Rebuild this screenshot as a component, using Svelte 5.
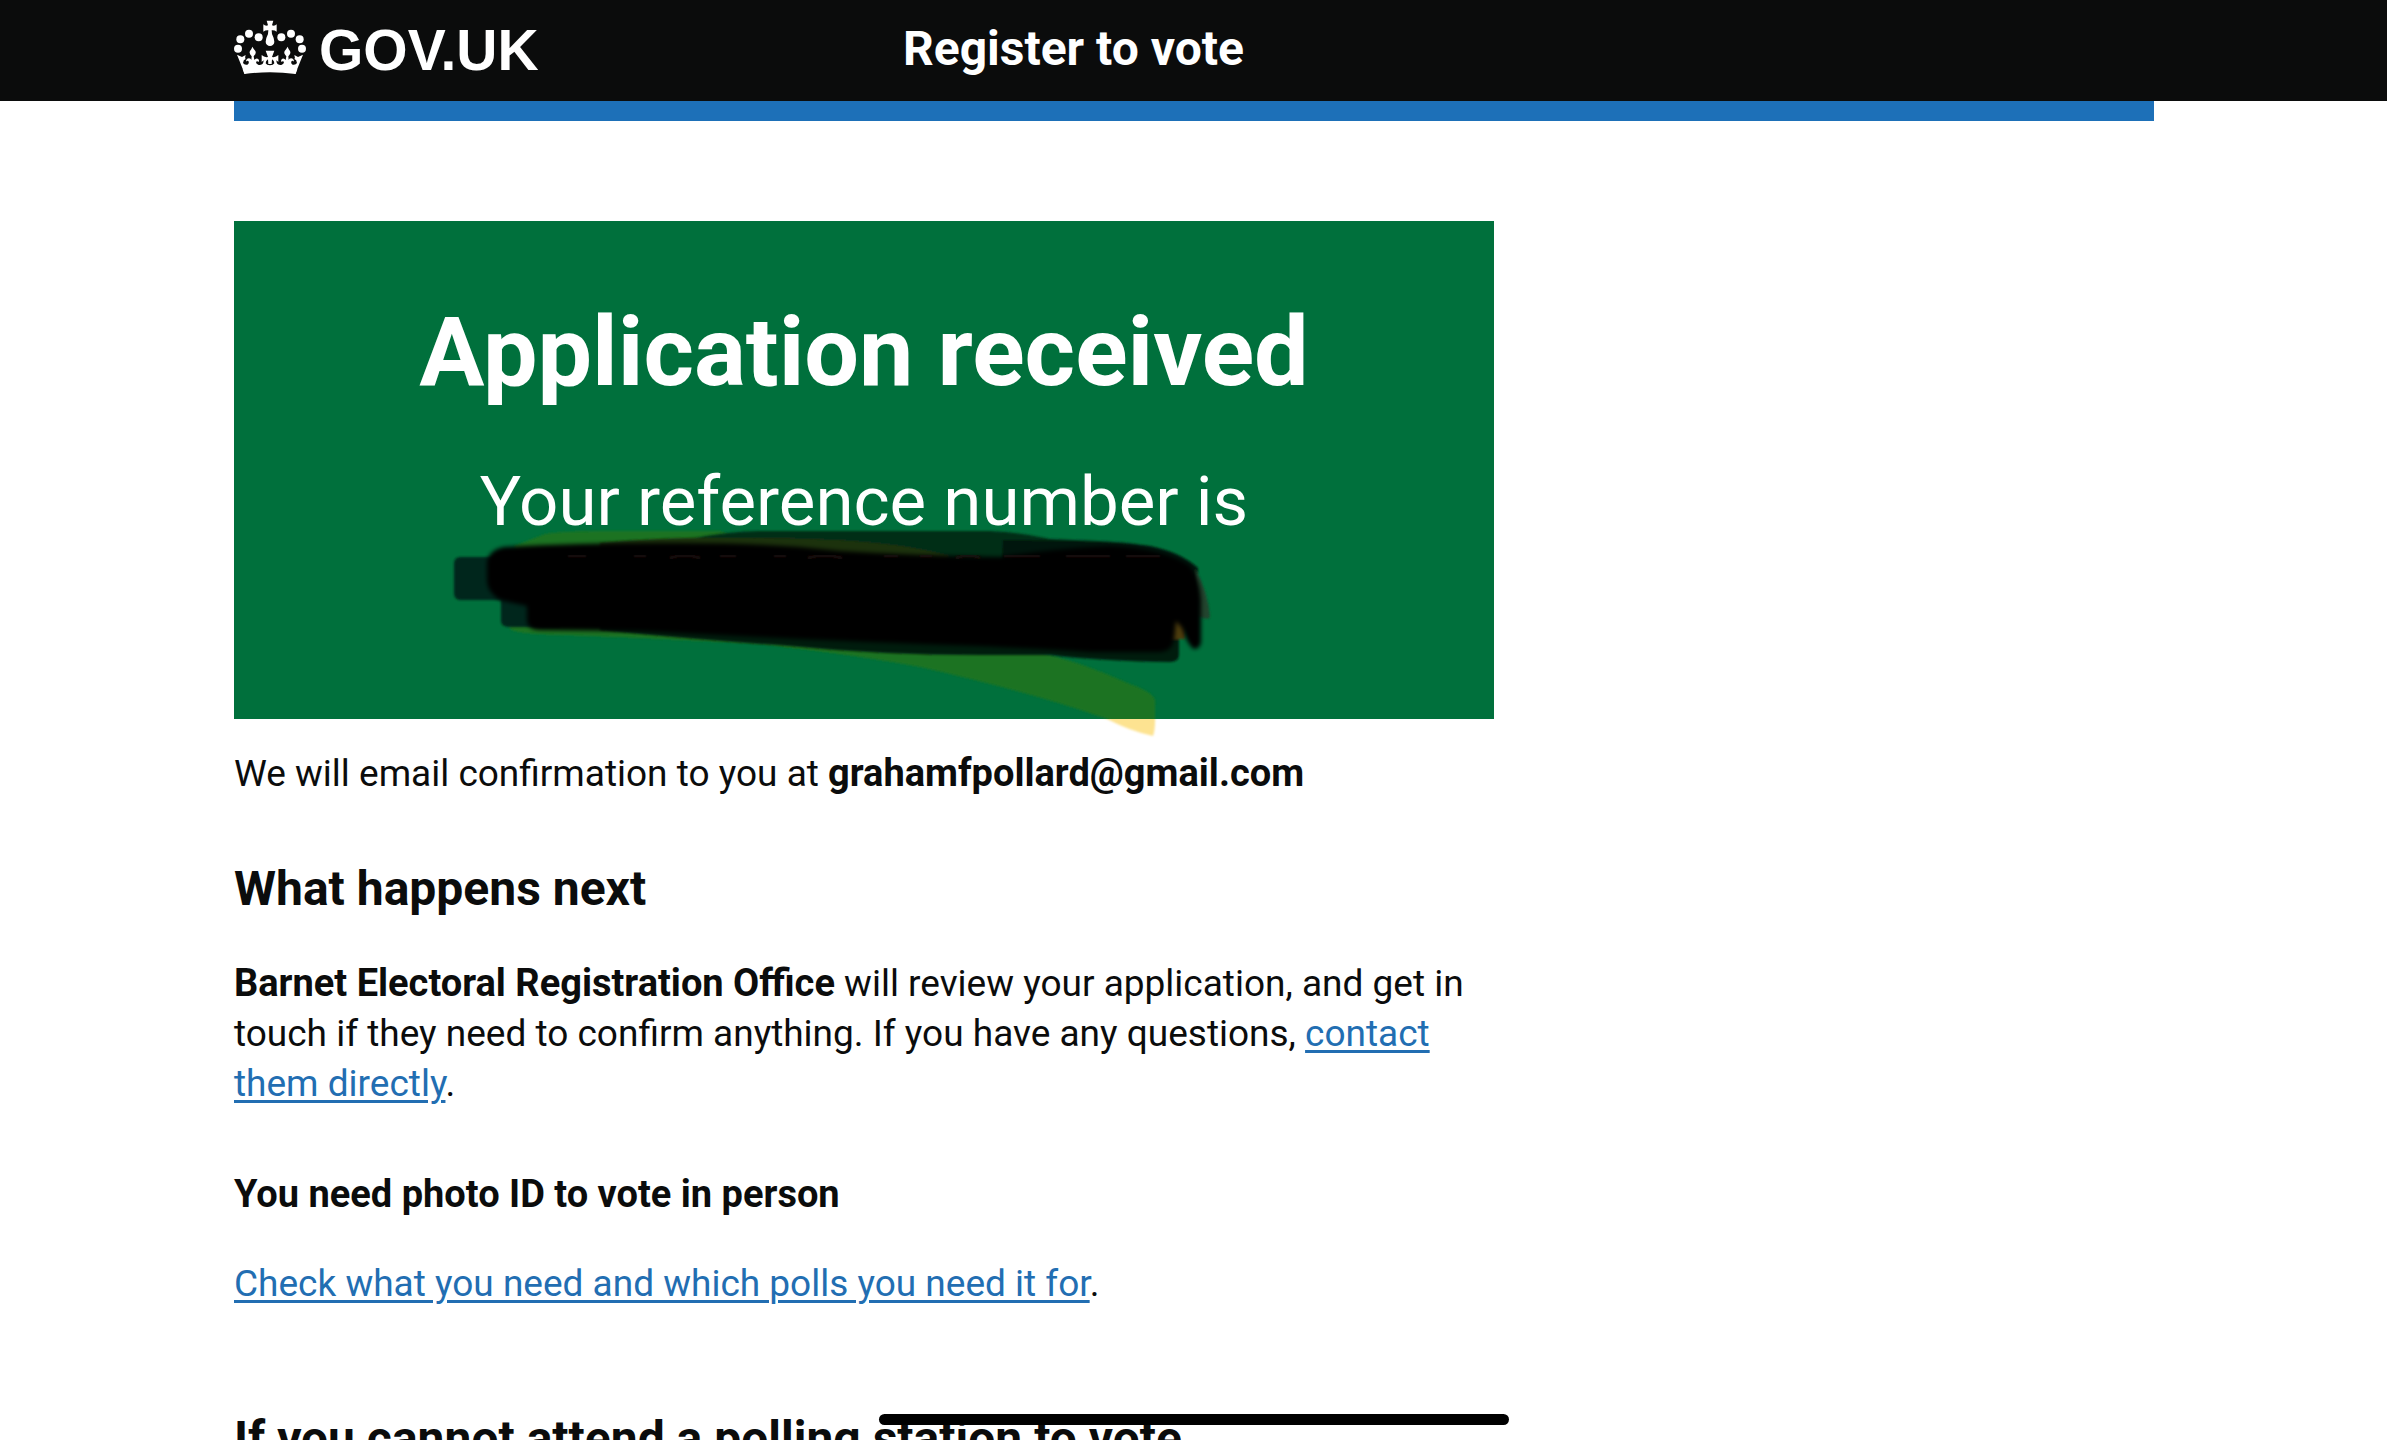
<script>
  const beads = [
    [57, 54], [86, 65], [31, 71], [24, 99],
    [183, 54], [154, 65], [209, 71], [216, 99]
  ];
</script>

<div class="page">
  <header class="top">
    <div class="container top-row">
      <a class="logo" href="#home" aria-label="GOV.UK">
        <svg class="crown" viewBox="12 13 216 162" aria-hidden="true">
          {#each beads as [x, y]}
            <circle cx={x} cy={y} r="12" />
          {/each}
          <path d="M110 15H130L126 29Q134 32 140 26V48Q133 43 125 44L126 55Q133 69 133 78A13 13 0 0 1 107 78Q107 69 114 55L115 44Q107 43 100 48V26Q106 32 114 29Z" />
          <path d="M120 157Q82 157 44 174L21 117L36 124L47 118Q44 127 47 130Q40 132 39 142Q43 149 52 147Q59 143 55 136Q51 134 48 138Q48 129 57 128Q63 129 64 133L65 122Q56 113 60 106Q65 100 67 93Q71 100 76 106Q80 113 71 122L73 133Q77 127 83 129Q89 132 86 139Q81 134 78 139Q78 145 86 148Q98 149 100 140Q100 136 103 134Q97 136 95 139V118Q103 126 114 124L107 105H120Z" />
          <path d="M120 157Q158 157 196 174L219 117L204 124L193 118Q196 127 193 130Q200 132 201 142Q197 149 188 147Q181 143 185 136Q189 134 192 138Q192 129 183 128Q177 129 176 133L175 122Q184 113 180 106Q175 100 173 93Q169 100 164 106Q160 113 169 122L167 133Q163 127 157 129Q151 132 154 139Q159 134 162 139Q162 145 154 148Q142 149 140 140Q140 136 137 134Q143 136 145 139V118Q137 126 126 124L133 105H120Z" />
          <path d="M38 160Q120 144 202 160L197 175Q120 164 43 175Z" />
          <path class="hole" d="M114 131Q107 136 107 143Q110 149 120 149Q130 149 133 143Q133 136 126 131L125 145H115Z" />
        </svg>
        <span class="wordmark">GOV.UK</span>
      </a>
      <a class="service" href="#service">Register to vote</a>
    </div>
  </header>

  <div class="container">
    <div class="blue-bar"></div>
    <main class="column">
      <section class="panel">
        <h1>Application received</h1>
        <div class="panel-body">
          Your reference number is
          <div class="reference">
            <svg class="marker" viewBox="440 520 800 220" aria-hidden="true">
              <defs>
                <filter id="soft" x="-5%" y="-15%" width="110%" height="130%"><feGaussianBlur stdDeviation="2" /></filter>
                <filter id="edge" x="-5%" y="-15%" width="110%" height="130%"><feGaussianBlur stdDeviation="1" /></filter>
                <clipPath id="in-panel"><rect x="440" y="520" width="800" height="199" /></clipPath>
                <clipPath id="below-panel"><rect x="440" y="719" width="800" height="21" /></clipPath>
              </defs>
              <g filter="url(#edge)">
                <path class="olive" d="M514 546L545 534Q560 531 600 531H720L760 545V560H520Z" />
                <path class="olive" d="M510 618V629Q516 634 560 635L640 638L760 644L860 655V600H510Z" />
              </g>
              <g clip-path="url(#in-panel)">
                <path class="olive" filter="url(#edge)" d="M780 646Q860 656 920 667Q1030 692 1107 719Q1130 731 1153 736Q1156 730 1155 700Q1153 692 1130 684Q1080 661 1030 650L780 630Z" />
              </g>
              <g clip-path="url(#below-panel)">
                <path class="yellow" filter="url(#edge)" d="M780 646Q860 656 920 667Q1030 692 1107 719Q1130 731 1153 736Q1156 730 1155 700L780 630Z" />
              </g>
              <g filter="url(#edge)">
                <path class="deep" d="M690 539Q730 531 760 531H990Q1020 532 1050 539L1100 541Q1150 543 1175 554L1198 568V600H690Z" />
                <path class="deeper" d="M1003 540Q1100 540 1150 546Q1180 552 1198 568V590H1000Z" />
                <path class="brown" d="M600 543Q680 536 760 538Q890 538 950 556L930 572H600Z" />
                <rect class="left-cap" x="454" y="557" width="80" height="43" rx="6" />
                <path class="left-cap" d="M501 596V622Q502 627 510 627H560V596Z" />
                <path class="lower" d="M600 620V630Q700 640 790 646Q880 655 980 655H1050Q1100 661 1170 662Q1179 662 1179 655V620Z" />
                <path class="flap" d="M1195 568Q1208 592 1210 617Q1208 621 1198 616Z" />
                <path class="ochre" d="M1168 612L1186 622L1185 639H1168Z" />
              </g>
              <path class="black" filter="url(#soft)" d="M487 562Q489 550 504 547Q580 543 660 543Q760 542 840 551Q920 556 1000 557Q1050 549 1110 546Q1165 548 1190 566Q1200 580 1201 600V643Q1199 649 1194 649Q1188 646 1182 628L1176 621L1174 640Q1172 651 1160 652H1090Q1060 650 980 646Q860 642 760 637L640 631L540 630Q529 630 527 622V606L500 600Q487 592 487 580Z" />
              <path class="trace" filter="url(#edge)" d="M568 556H586M634 556H646M670 558Q684 553 700 558M720 556H736M774 556H786M808 558Q824 553 842 558M884 556H898M920 556H932M956 558Q970 553 980 558M1004 556H1040M1066 556H1110M1126 556H1160" />
            </svg>
          </div>
        </div>
      </section>

      <p>We will email confirmation to you at <strong>grahamfpollard@gmail.com</strong></p>

      <h2>What happens next</h2>
      <p>
        <strong>Barnet Electoral Registration Office</strong> will review your application, and get in
        touch if they need to confirm anything. If you have any questions,
        <a href="#contact">contact them directly</a>.
      </p>

      <h3>You need photo ID to vote in person</h3>
      <p><a href="#photo-id">Check what you need and which polls you need it for</a>.</p>

      <h2 class="late">If you cannot attend a polling station to vote</h2>
    </main>
  </div>

  <div class="home-bar"></div>
</div>

<style>
  :global(body) {
    margin: 0;
    background: #ffffff;
  }
  .page {
    position: relative;
    height: 100vh;
    overflow: hidden;
    background: #ffffff;
    color: #0b0c0c;
    font-family: Roboto, "Liberation Sans", Arial, sans-serif;
    font-size: 37px;
    line-height: 50px;
  }
  .container {
    max-width: 1920px;
    margin: 0 auto;
    padding: 0 233px 0 234px;
  }
  .top {
    background: #0b0c0c;
  }
  .top-row {
    display: grid;
    grid-template-columns: calc(33.333% + 29px) 1fr;
    align-items: center;
    height: 101px;
  }
  .logo,
  .service {
    color: #ffffff;
    text-decoration: none;
    font-weight: 700;
  }
  .logo {
    display: flex;
    align-items: center;
    gap: 13px;
  }
  .crown {
    width: 72px;
    height: 54px;
    margin-bottom: 8px;
    fill: #ffffff;
  }
  .hole {
    fill: #0b0c0c;
  }
  .wordmark {
    font-family: "Liberation Sans", Arial, sans-serif;
    font-size: 57px;
    line-height: 64px;
    padding-bottom: 2px;
  }
  .service {
    font-size: 48px;
    line-height: 60px;
    padding-bottom: 4px;
  }
  .blue-bar {
    height: 20px;
    background: #1d70b8;
  }
  .column {
    width: calc(66.6667% - 20px);
    padding-top: 100px;
  }
  .panel {
    margin-bottom: 30px;
    padding: 81px 70px 97px;
    background: #00703c;
    color: #ffffff;
    text-align: center;
  }
  h1 {
    margin: 0 0 60px;
    font-size: 97px;
    line-height: 100px;
  }
  .panel-body {
    font-size: 69px;
    line-height: 80px;
  }
  .reference {
    position: relative;
    height: 80px;
  }
  .marker {
    position: absolute;
    left: calc(50% - 424px);
    top: -22px;
    width: 800px;
    height: 220px;
  }
  .olive { fill: #1c7323; }
  .yellow { fill: #fde391; }
  .deep { fill: #002d19; }
  .deeper { fill: #00150b; }
  .brown { fill: #1d3010; }
  .left-cap { fill: #00271a; }
  .lower { fill: #001d0f; }
  .flap { fill: #24452f; }
  .ochre { fill: #4d3e0a; }
  .black { fill: #020000; }
  .trace {
    fill: none;
    stroke: #1c0a09;
    stroke-width: 3;
  }
  p {
    margin: 0 0 40px;
  }
  h2 {
    margin: 60px 0 40px;
    font-size: 48px;
    line-height: 60px;
  }
  h2.late {
    margin-top: 100px;
  }
  h3 {
    margin: 60px 0 40px;
    font-size: 38px;
    line-height: 50px;
  }
  strong {
    font-size: 38px;
    font-weight: 700;
    line-height: 40px;
  }
  p a {
    color: #226eb2;
    text-decoration: underline;
    text-decoration-thickness: 3px;
    text-underline-offset: 4px;
  }
  .home-bar {
    position: absolute;
    left: 50%;
    bottom: 15px;
    width: 630px;
    height: 11px;
    border-radius: 6px;
    background: #000000;
    transform: translateX(-50%);
  }
</style>
